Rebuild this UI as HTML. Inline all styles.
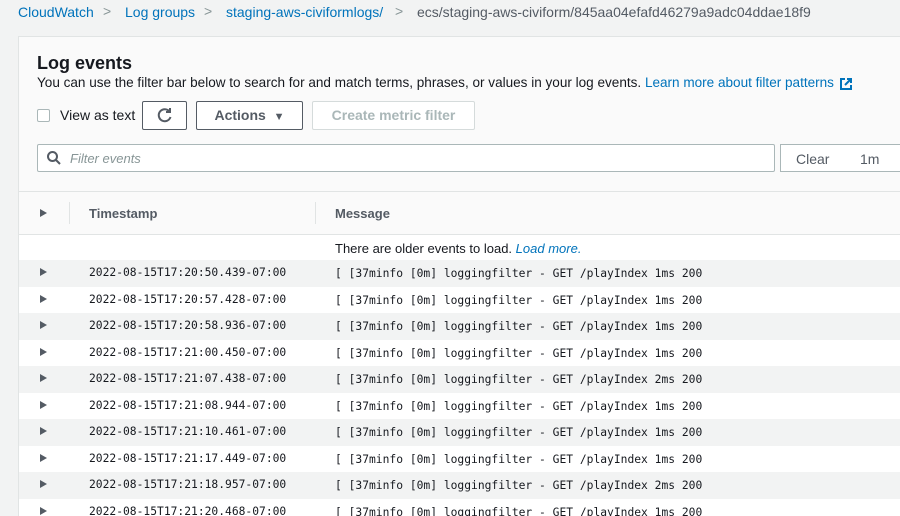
<!DOCTYPE html>
<html><head><meta charset="utf-8"><style>
*{margin:0;padding:0;box-sizing:border-box}
html,body{width:900px;height:516px;overflow:hidden}
body{background:#f2f3f3;font-family:"Liberation Sans",sans-serif;color:#16191f;position:relative}
.a{position:absolute;white-space:nowrap}
.bc{top:4px;font-size:14px;color:#0073bb}
.sep{color:#879596;font-size:14px;top:3px}
.panel{left:18px;top:36px;width:882px;height:480px;background:#fafafa;border:1px solid #e1e4e4;border-bottom:none;border-right:none}
.btn{border:1px solid #545b64;background:#fff;height:29px;border-radius:2px;font-weight:bold;font-size:14px;color:#545b64;text-align:center;line-height:27px}
.mono{font-family:"DejaVu Sans Mono","Liberation Mono",monospace;font-size:11.3px;color:#16191f}
.row{position:absolute;left:19px;width:881px;height:26.5px}
.tri{position:absolute;left:21px;width:0;height:0;border-left:7px solid #545b64;border-top:4px solid transparent;border-bottom:4px solid transparent}
</style></head><body>
<div class="a bc" style="left:18px">CloudWatch</div>
<div class="a sep" style="left:103px">&gt;</div>
<div class="a bc" style="left:125px">Log groups</div>
<div class="a sep" style="left:204px">&gt;</div>
<div class="a bc" style="left:226px">staging-aws-civiformlogs/</div>
<div class="a sep" style="left:395px">&gt;</div>
<div class="a" style="left:417px;top:4px;font-size:14px;color:#545b64">ecs/staging-aws-civiform/845aa04efafd46279a9adc04ddae18f9</div>
<div class="a panel"></div>
<div class="a" style="left:37px;top:53px;font-size:18px;font-weight:bold">Log events</div>
<div class="a" style="left:37px;top:75px;font-size:13.55px">You can use the filter bar below to search for and match terms, phrases, or values in your log events. <span style="color:#0073bb">Learn more about filter patterns</span></div>
<svg class="a" style="left:839px;top:77px" width="14" height="14" viewBox="0 0 14 14" fill="none" stroke="#0073bb" stroke-width="2"><path d="M6 2H2v10h10V8M8 2h4v4M12 2L6 8"/></svg>
<div class="a" style="left:37px;top:109px;width:13px;height:13px;border:1px solid #aab7b8;background:#fff;border-radius:2px"></div>
<div class="a" style="left:60px;top:107px;font-size:14px">View as text</div>
<div class="a btn" style="left:142px;top:101px;width:45px"></div>
<svg class="a" style="left:155px;top:106px" width="19" height="19" viewBox="0 0 19 19" fill="none" stroke="#545b64" stroke-width="2"><path d="M14.5 5.5A6 6 0 1 0 15.5 11"/><path d="M15 2v4h-4"/></svg>
<div class="a btn" style="left:196px;top:101px;width:107px">Actions &nbsp;<span style="font-size:11px">▼</span></div>
<div class="a btn" style="left:312px;top:101px;width:163px;border-color:#d5dbdb;color:#aab7b8">Create metric filter</div>
<div class="a" style="left:37px;top:144px;width:738px;height:28px;border:1px solid #aab7b8;background:#fff;border-radius:2px"></div>
<svg class="a" style="left:46px;top:150px" width="16" height="16" viewBox="0 0 16 16" fill="none" stroke="#545b64" stroke-width="2"><circle cx="6.5" cy="6.5" r="4.5"/><path d="M10 10l4 4"/></svg>
<div class="a" style="left:70px;top:151px;font-size:13px;font-style:italic;color:#879596">Filter events</div>
<div class="a" style="left:780px;top:144px;width:120px;height:28px;border:1px solid #aab7b8;border-right:none;background:#fff"></div>
<div class="a" style="left:796px;top:151px;font-size:14px;color:#545b64">Clear</div>
<div class="a" style="left:860px;top:151px;font-size:14px;color:#545b64">1m</div>
<div class="a" style="left:19px;top:191px;width:881px;height:1px;background:#e1e4e4"></div>
<div class="a" style="left:19px;top:234px;width:881px;height:1px;background:#e1e4e4"></div>
<div class="tri" style="top:209px;left:40px"></div>
<div class="a" style="left:69px;top:202px;width:1px;height:22px;background:#e1e4e4"></div>
<div class="a" style="left:89px;top:206px;font-size:13px;font-weight:bold;color:#545b64">Timestamp</div>
<div class="a" style="left:315px;top:202px;width:1px;height:22px;background:#e1e4e4"></div>
<div class="a" style="left:335px;top:206px;font-size:13px;font-weight:bold;color:#545b64">Message</div>
<div class="row" style="top:235px;height:25px;background:#fff"></div>
<div class="a" style="left:335px;top:241px;font-size:13px">There are older events to load. <i style="color:#0073bb">Load more.</i></div>
<div id="rows"></div>
<script>
var ts=["20:50.439","20:57.428","20:58.936","21:00.450","21:07.438","21:08.944","21:10.461","21:17.449","21:18.957","21:20.468"];
var ms=["1ms","1ms","1ms","1ms","2ms","1ms","1ms","1ms","2ms","1ms"];
var h="";
for(var i=0;i<10;i++){var t=260+26.5*i;var ht=(i==9)?(516-t):26.5;
h+='<div class="row" style="top:'+t+'px;height:'+ht+'px;background:'+(i%2==0?'#f2f3f3':'#fff')+'"><div class="tri" style="top:8px"></div></div>';
h+='<div class="a mono" style="left:89px;top:'+(t+6)+'px">2022-08-15T17:'+ts[i]+'-07:00</div>';
h+='<div class="a mono" style="left:335px;top:'+(t+7)+'px">[ [37minfo [0m] loggingfilter - GET /playIndex '+ms[i]+' 200</div>';}
document.getElementById("rows").innerHTML=h;
</script>
</body></html>
